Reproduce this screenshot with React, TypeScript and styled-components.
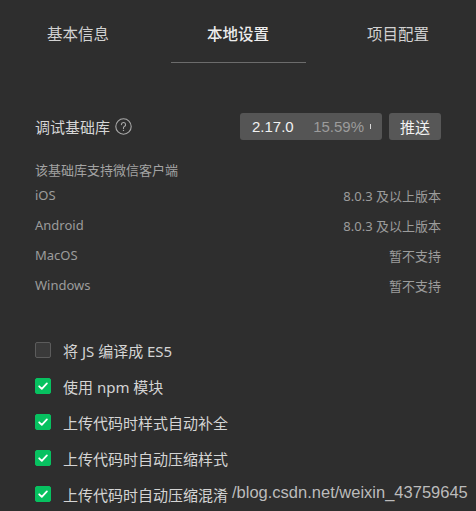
import React from 'react';
import styled, { createGlobalStyle } from 'styled-components';

const GlobalStyle = createGlobalStyle`
  html, body {
    margin: 0;
    padding: 0;
    background: #2e2e2e;
  }
  body {
    font-family: "Noto Sans", "Noto Sans CJK SC", sans-serif;
  }
`;

const Page = styled.div`
  position: relative;
  width: 476px;
  height: 511px;
  overflow: hidden;
  background: #2e2e2e;
`;

const Tabs = styled.div`
  display: grid;
  grid-template-columns: repeat(3, 160px);
  margin-left: -2px;
  height: 63px;
`;

const Tab = styled.div<{ $active?: boolean }>`
  position: relative;
  padding-top: 24px;
  text-align: center;
  font-size: 15.5px;
  line-height: 20px;
  font-weight: ${(p) => (p.$active ? 500 : 400)};
  color: ${(p) => (p.$active ? '#ececec' : '#d2d2d2')};

  &::after {
    content: '';
    display: ${(p) => (p.$active ? 'block' : 'none')};
    position: absolute;
    left: 13px;
    right: 12px;
    top: 62px;
    height: 1px;
    background: #6c6c6c;
  }
`;

const Content = styled.div`
  padding: 0 35px;
`;

const LibRow = styled.div`
  display: flex;
  align-items: center;
  margin-top: 50px;
  height: 27px;
`;

const LibLabel = styled.div`
  font-size: 15px;
  color: #d6d6d6;
  display: flex;
  align-items: center;
  gap: 5px;
`;

const VersionBox = styled.div`
  margin-left: auto;
  width: 142px;
  height: 27px;
  box-sizing: border-box;
  padding: 0 11px 0 12px;
  display: flex;
  align-items: center;
  background: #555555;
  border-radius: 3px;
  font-family: "Liberation Sans", "Noto Sans", sans-serif;
  font-size: 15px;
`;

const Version = styled.span`
  color: #f2f2f2;
`;

const Percent = styled.span`
  margin-left: auto;
  color: #9c9c9c;
`;

const Cursor = styled.span`
  width: 1px;
  height: 5px;
  margin-left: 6px;
  background: #d8d8d8;
`;

const PushButton = styled.button`
  margin-left: 7px;
  width: 52px;
  height: 27px;
  border: none;
  border-radius: 3px;
  background: #575757;
  color: #f2f2f2;
  font-family: "Noto Sans CJK SC", sans-serif;
  font-size: 15px;
  padding: 0;
`;

const Caption = styled.div`
  margin-top: 21px;
  font-size: 13px;
  line-height: 18px;
  color: #a3a3a3;
  margin-bottom: 1px;
`;

const InfoRow = styled.div`
  display: flex;
  justify-content: space-between;
  align-items: center;
  height: 30px;
  font-size: 13px;
  color: #9c9c9c;
`;

const Options = styled.div`
  margin-top: 32px;
`;

const OptionRow = styled.label`
  display: flex;
  align-items: center;
  height: 36px;
  gap: 12px;
  font-size: 15px;
  color: #d4d4d4;
`;

const Box = styled.span<{ $checked?: boolean }>`
  width: 16px;
  height: 16px;
  box-sizing: border-box;
  border-radius: 2px;
  display: flex;
  align-items: center;
  justify-content: center;
  background: ${(p) => (p.$checked ? '#07c160' : '#3a3a3a')};
  border: 1px solid ${(p) => (p.$checked ? '#07c160' : '#5c5c5c')};
`;

const Watermark = styled.div`
  position: absolute;
  left: 232px;
  top: 480px;
  font-family: "Liberation Sans", sans-serif;
  font-size: 16.5px;
  line-height: 24px;
  color: rgba(215, 215, 215, 0.85);
  white-space: nowrap;
  pointer-events: none;
`;

const HelpIcon = () => (
  <svg width="17" height="17" viewBox="0 0 17 17" fill="none">
    <circle cx="8.5" cy="8.5" r="7.7" stroke="#a8a8a8" strokeWidth="1.1" />
    <path
      d="M6.4 6.6a2.1 2.1 0 1 1 2.9 2c-.55.25-.8.6-.8 1.2v.6"
      stroke="#a8a8a8"
      strokeWidth="1.1"
      strokeLinecap="round"
    />
    <circle cx="8.5" cy="12.4" r="0.7" fill="#a8a8a8" />
  </svg>
);

const Check = () => (
  <svg width="12" height="12" viewBox="0 0 12 12" fill="none">
    <path d="M2.2 6.3 4.8 8.8 9.9 3.4" stroke="#ffffff" strokeWidth="1.8" strokeLinecap="round" strokeLinejoin="round" />
  </svg>
);

const clients = [
  { name: 'iOS', value: '8.0.3 及以上版本' },
  { name: 'Android', value: '8.0.3 及以上版本' },
  { name: 'MacOS', value: '暂不支持' },
  { name: 'Windows', value: '暂不支持' },
];

const options = [
  { label: '将 JS 编译成 ES5', checked: false },
  { label: '使用 npm 模块', checked: true },
  { label: '上传代码时样式自动补全', checked: true },
  { label: '上传代码时自动压缩样式', checked: true },
  { label: '上传代码时自动压缩混淆', checked: true },
];

export default function App() {
  return (
    <Page>
      <GlobalStyle />
      <Tabs>
        <Tab>基本信息</Tab>
        <Tab $active>本地设置</Tab>
        <Tab>项目配置</Tab>
      </Tabs>
      <Content>
        <LibRow>
          <LibLabel>
            调试基础库
            <HelpIcon />
          </LibLabel>
          <VersionBox>
            <Version>2.17.0</Version>
            <Percent>15.59%</Percent>
            <Cursor />
          </VersionBox>
          <PushButton type="button">推送</PushButton>
        </LibRow>
        <Caption>该基础库支持微信客户端</Caption>
        {clients.map((c) => (
          <InfoRow key={c.name}>
            <span>{c.name}</span>
            <span>{c.value}</span>
          </InfoRow>
        ))}
        <Options>
          {options.map((o) => (
            <OptionRow key={o.label}>
              <Box $checked={o.checked}>{o.checked && <Check />}</Box>
              {o.label}
            </OptionRow>
          ))}
        </Options>
      </Content>
      <Watermark>/blog.csdn.net/weixin_43759645</Watermark>
    </Page>
  );
}
